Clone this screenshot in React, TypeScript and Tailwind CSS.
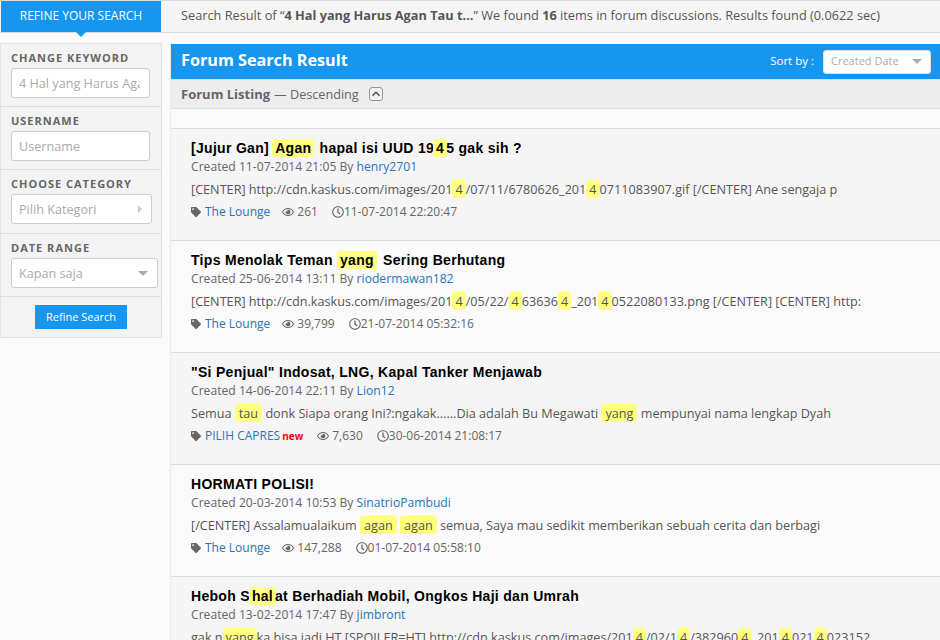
import React from "react";
import { FaTag, FaRegEye, FaRegClock } from "react-icons/fa";

const Hl = ({ children, tight }: { children: React.ReactNode; tight?: boolean }) => (
  <span className={`inline-block bg-[#ffff80] rounded-[3px] leading-[18px] ${tight ? "px-[3px]" : "px-1"}`}>{children}</span>
);
const Ht = ({ children, className }: { children: React.ReactNode; className?: string }) => (
  <span className={`inline-block bg-[#ffff80] rounded-[3px] leading-[18px] px-[3px] ${className ?? ""}`}>{children}</span>
);

type Item = {
  title: React.ReactNode; created: string; by: string; body: React.ReactNode;
  cat: string; isNew?: boolean; views: string; last: string;
};

const items: Item[] = [
  {
    title: <>[Jujur Gan] <Ht className="-ml-[1px] mr-[1px]">Agan</Ht> hapal isi UUD 19<Ht className="-mx-[1px]">4</Ht>5 gak sih ?</>,
    created: "11-07-2014 21:05", by: "henry2701",
    body: <>[CENTER] http://cdn.kaskus.com/images/201<Hl tight>4</Hl>/07/11/6780626_201<Hl tight>4</Hl>0711083907.gif [/CENTER] Ane sengaja p</>,
    cat: "The Lounge", views: "261", last: "11-07-2014 22:20:47",
  },
  {
    title: <>Tips Menolak Teman <Ht className="mr-[2px]">yang</Ht> Sering Berhutang</>,
    created: "25-06-2014 13:11", by: "riodermawan182",
    body: <>[CENTER] http://cdn.kaskus.com/images/201<Hl tight>4</Hl>/05/22/<Hl tight>4</Hl>63636<Hl tight>4</Hl>_201<Hl tight>4</Hl>0522080133.png [/CENTER] [CENTER] http:</>,
    cat: "The Lounge", views: "39,799", last: "21-07-2014 05:32:16",
  },
  {
    title: <>"Si Penjual" Indosat, LNG, Kapal Tanker Menjawab</>,
    created: "14-06-2014 22:11", by: "Lion12",
    body: <>Semua <Hl>tau</Hl> donk Siapa orang Ini?:ngakak......Dia adalah Bu Megawati <Hl>yang</Hl> mempunyai nama lengkap Dyah</>,
    cat: "PILIH CAPRES", isNew: true, views: "7,630", last: "30-06-2014 21:08:17",
  },
  {
    title: <>HORMATI POLISI!</>,
    created: "20-03-2014 10:53", by: "SinatrioPambudi",
    body: <>[/CENTER] Assalamualaikum <Hl>agan</Hl> <Hl>agan</Hl> semua, Saya mau sedikit memberikan sebuah cerita dan berbagi</>,
    cat: "The Lounge", views: "147,288", last: "01-07-2014 05:58:10",
  },
  {
    title: <>Heboh S<Ht className="-mx-[1px]">hal</Ht>at Berhadiah Mobil, Ongkos Haji dan Umrah</>,
    created: "13-02-2014 17:47", by: "jimbront",
    body: <>gak n<Hl tight>yang</Hl>ka bisa jadi HT [SPOILER=HT] http://cdn.kaskus.com/images/201<Hl tight>4</Hl>/02/1<Hl tight>4</Hl>/382960<Hl tight>4</Hl>_201<Hl tight>4</Hl>021<Hl tight>4</Hl>023152</>,
    cat: "The Lounge", views: "52,110", last: "01-07-2014 05:58:10",
  },
];

const Label = ({ children }: { children: React.ReactNode }) => (
  <div className="text-[11px] leading-[16px] font-bold tracking-[1px] text-[#666] mb-[2px] whitespace-nowrap">{children}</div>
);

const Caret = () => (
  <span className="w-0 h-0 border-x-[5px] border-x-transparent border-t-[5px] border-t-[#aaa]" />
);

const Field = ({ text, w, icon }: { text: string; w: string; icon?: React.ReactNode }) => (
  <div className={`${w} h-[30px] bg-white border border-[#ccc] rounded-[3px] flex items-center justify-between pl-[7px] pr-[9px] text-[12.65px] text-[#aaa] overflow-hidden whitespace-nowrap`}>
    <span className="overflow-hidden">{text}</span>
    {icon}
  </div>
);

const Section = ({ children, className }: { children: React.ReactNode; className?: string }) => (
  <div className={`px-[10px] pt-[6px] border-b border-[#ddd] ${className ?? "pb-[8px]"}`}>{children}</div>
);

export default function App() {
  return (
    <div className="w-[940px] h-[640px] overflow-hidden bg-[#fafafa] text-[#555] font-['Open_Sans',sans-serif]">
      <div className="h-[33px] flex bg-[#f5f5f5] border-y border-[#ddd] relative">
        <div className="w-[160px] ml-px h-[31px] bg-[#1696ef] text-white text-[12px] flex items-center justify-center relative pb-[2px]">
          REFINE YOUR SEARCH
          <span className="absolute left-[75px] top-[31px] w-0 h-0 border-x-[5px] border-x-transparent border-t-[5px] border-t-[#1696ef]" />
        </div>
        <div className="pl-5 text-[12.75px] leading-[28px] text-[#555] whitespace-nowrap">
          Search Result of “<b>4 Hal yang Harus Agan Tau t...</b>” We found <b>16</b> items in forum discussions. Results found (0.0622 sec)
        </div>
      </div>
      <div className="flex items-start gap-2 pt-[10px]">
        <aside className="w-[162px] shrink-0 bg-[#f3f3f3] border border-[#e3e3e3]">
          <Section><Label>CHANGE KEYWORD</Label><Field w="w-[139px]" text="4 Hal yang Harus Agan Tau" /></Section>
          <Section><Label>USERNAME</Label><Field w="w-[139px]" text="Username" /></Section>
          <Section className="pb-[9px]"><Label>CHOOSE CATEGORY</Label>
            <Field w="w-[141px]" text="Pilih Kategori" icon={<span className="w-0 h-0 border-y-[4px] border-y-transparent border-l-[4px] border-l-[#ccc]" />} />
          </Section>
          <Section><Label>DATE RANGE</Label><Field w="w-[147px]" text="Kapan saja" icon={<Caret />} /></Section>
          <div className="h-[40px] flex items-center justify-center">
            <div className="w-[92px] h-[24px] bg-[#1696ef] text-white text-[11px] flex items-center justify-center">Refine Search</div>
          </div>
        </aside>
        <main className="flex-1 min-w-0 border-l border-[#eaeaea] pt-px">
          <div className="h-[35px] bg-[#1696ef] flex items-center justify-between pl-[10px] pr-[9px]">
            <h1 className="text-[16.2px] font-bold text-white pb-[2px]">Forum Search Result</h1>
            <div className="flex items-center gap-[9px]">
              <span className="text-[11.5px] text-white pl-px pb-[2px]">Sort by :</span>
              <div className="w-[108px] h-[24px] bg-white border border-[#ddd] rounded-[3px] flex items-center justify-between pl-[7px] pr-[8px] text-[11px] text-[#aaa]">
                Created Date <Caret />
              </div>
            </div>
          </div>
          <div className="h-[30px] bg-[#ededed] border-y border-[#ddd] flex items-center pl-[10px] pt-[1px] text-[13px] text-[#666]">
            <b>Forum Listing</b><span className="ml-1 text-[12.65px]">— Descending</span>
            <span className="ml-[10px] -mt-[2px] w-[14px] h-[14px] border border-[#999] rounded-[3px] bg-[#f2f2f2] flex items-center justify-center">
              <svg width="10" height="8" viewBox="0 0 10 8" fill="none" stroke="#4a5a6a" strokeWidth="1.6">
                <path d="M1.5 5.8 L5 2.3 L8.5 5.8" />
              </svg>
            </span>
          </div>
          <div className="h-[19px]" />
          {items.map((it, i) => (
            <div key={i} className={`h-[112px] border-t border-[#ddd] pl-5 pt-[10px] whitespace-nowrap overflow-hidden ${i % 2 === 0 ? "bg-[#f5f5f5]" : "bg-[#fafafa]"}`}>
              <div className="font-['Liberation_Sans',sans-serif] font-bold text-[14px] leading-[18px] text-black tracking-[0.3px]">{it.title}</div>
              <div className="text-[12.15px] leading-[16px] mt-[2px] text-[#666]">
                Created {it.created} By <span className="text-[#2a74b8]">{it.by}</span>
              </div>
              <div className="text-[12.65px] leading-[18px] mt-[5px] text-[#555]">{it.body}</div>
              <div className="flex items-center text-[12px] leading-[16px] mt-[6px] text-[#666]">
                <FaTag className="text-[#666] w-[10px] h-[10px] mr-[4px]" />
                <span className="text-[#2a74b8]">{it.cat}</span>
                {it.isNew && <span className="mx-[2px] text-[10px] font-bold text-[#f00]">new</span>}
                <FaRegEye className="ml-[12px] w-[12px] h-[12px] mr-[3px]" />
                <span>{it.views}</span>
                <FaRegClock className="ml-[14px] w-[12px] h-[12px]" />
                <span>{it.last}</span>
              </div>
            </div>
          ))}
        </main>
      </div>
    </div>
  );
}
